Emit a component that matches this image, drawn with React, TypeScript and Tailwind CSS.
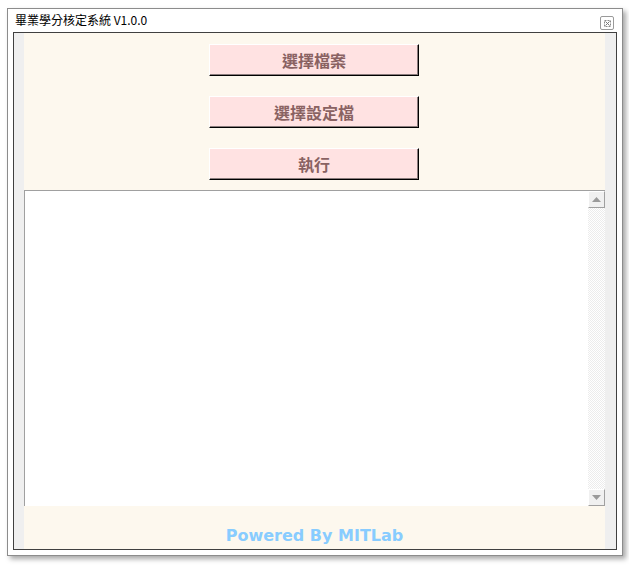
const ui = '"Liberation Sans", "Noto Sans CJK TC", sans-serif'
const cjk = '"Noto Sans CJK TC", "Liberation Sans", sans-serif'

function PinkButton({ label }: { label: string }) {
  return (
    <button
      className="w-[210px] h-[32px] bg-[#ffe2e2] border-t border-l border-t-white border-l-white border-r border-b border-r-black border-b-black shadow-[inset_-1px_-1px_0_#8a7c7c] text-[16px] font-bold text-[#8a6262] flex items-center justify-center leading-none pb-[1px]"
      style={{ fontFamily: cjk }}
    >
      {label}
    </button>
  )
}

function ScrollArrow({ up }: { up: boolean }) {
  return (
    <div className="w-[17px] h-[17px] bg-[#f0f0f0] border border-t-white border-l-white border-r-[#a0a0a0] border-b-[#a0a0a0] flex items-center justify-center">
      <svg width="9" height="5" viewBox="0 0 9 5">
        {up ? (
          <polygon points="4.5,0 9,5 0,5" fill="#9a9a9a" />
        ) : (
          <polygon points="0,0 9,0 4.5,5" fill="#9a9a9a" />
        )}
      </svg>
    </div>
  )
}

export default function App() {
  return (
    <div className="w-[629px] h-[567px] bg-white pl-[7px] pt-[8px]" style={{ fontFamily: ui }}>
      {/* Window */}
      <div className="w-[616px] h-[548px] bg-white border border-[#8c8c8c] shadow-[3px_3px_5px_rgba(0,0,0,0.35)] flex flex-col">
        {/* Title bar */}
        <div className="h-[23px] flex items-center justify-between pl-[7px] pr-[8px]">
          <span className="text-[12px] text-black leading-none -mt-[1px]" style={{ fontFamily: cjk }}>
            畢業學分核定系統 V1.0.0
          </span>
          <div className="w-[14px] h-[14px] mt-[5px] border border-[#9a9a9a] rounded-[2px] flex items-center justify-center">
            <svg width="7" height="7" viewBox="0 0 7 7">
              <rect x="0.5" y="0.5" width="6" height="6" fill="none" stroke="#8a8a8a" strokeWidth="1" strokeDasharray="2 1" />
              <path d="M1.5 1.5 L5.5 5.5 M5.5 1.5 L1.5 5.5" stroke="#7a7a7a" strokeWidth="1" />
            </svg>
          </div>
        </div>

        {/* Frame */}
        <div className="mx-[5px] mb-[5px] flex-1 border border-[#404040] bg-[#efefef] flex px-[10px]">
          <div className="w-[581px] bg-[#fdf8ee] flex flex-col">
            <div className="flex flex-col items-center gap-[20px] pt-[11px] pr-[1px]">
              <PinkButton label="選擇檔案" />
              <PinkButton label="選擇設定檔" />
              <PinkButton label="執行" />
            </div>

            {/* Log box */}
            <div className="mt-[10px] h-[316px] flex border-t border-l border-[#a0a0a0] bg-white">
              <div className="flex-1" />
              <div className="w-[17px] flex flex-col bg-[repeating-conic-gradient(#ececec_0%_25%,#ffffff_0%_50%)] bg-[length:2px_2px]">
                <ScrollArrow up />
                <div className="flex-1" />
                <ScrollArrow up={false} />
              </div>
            </div>

            <div className="flex-1 flex justify-center pt-[20px]">
              <span
                className="text-[16px] font-bold text-[#88ccff] leading-[20px]"
                style={{ fontFamily: '"DejaVu Sans", Verdana, sans-serif' }}
              >
                Powered By MITLab
              </span>
            </div>
          </div>
        </div>
      </div>
    </div>
  )
}
